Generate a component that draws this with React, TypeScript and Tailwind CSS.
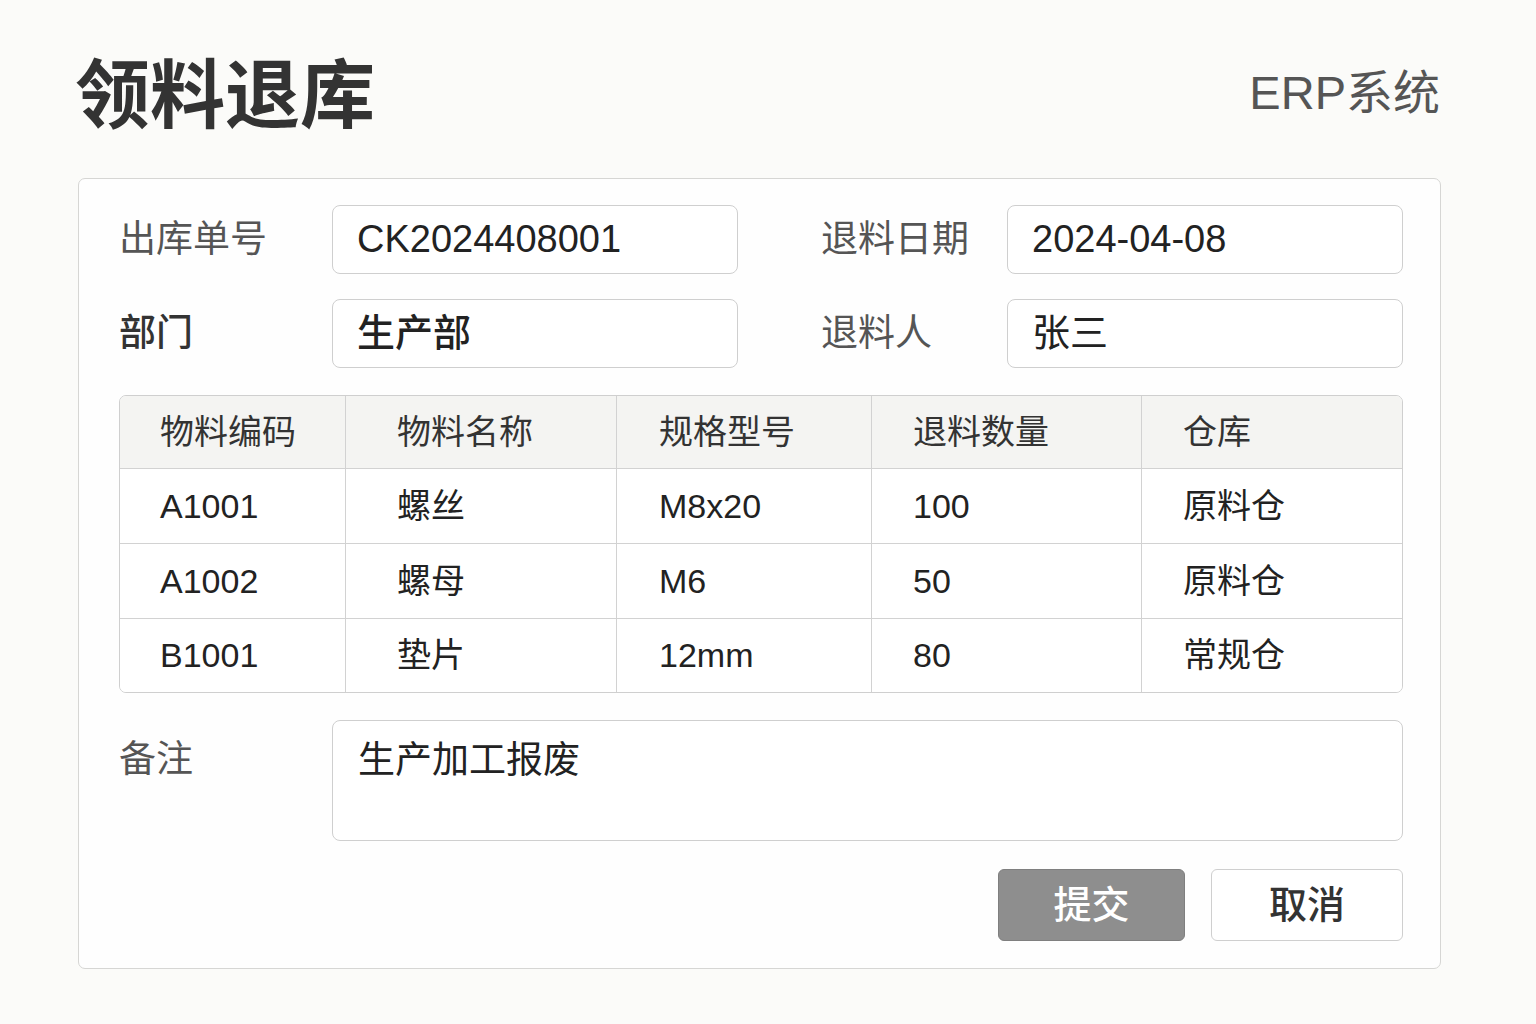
import React from "react";

const FONT = { fontFamily: '"Liberation Sans", "Noto Sans CJK SC", sans-serif' };

const rows = [
  ["A1001", "螺丝", "M8x20", "100", "原料仓"],
  ["A1002", "螺母", "M6", "50", "原料仓"],
  ["B1001", "垫片", "12mm", "80", "常规仓"],
];
const heads = ["物料编码", "物料名称", "规格型号", "退料数量", "仓库"];
const colW = ["w-[226px]", "w-[271px]", "w-[255px]", "w-[270px]", "flex-1"];
const colPad = ["pl-[40px]", "pl-[51px]", "pl-[42px]", "pl-[41px]", "pl-[41px]"];

function Field({ value, className = "" }: { value: string; className?: string }) {
  return (
    <div
      className={`h-[69px] rounded-[8px] border border-[#cfcfcf] bg-white flex items-center pl-[24px] text-[38px] text-[#222] ${className}`}
    >
      {value}
    </div>
  );
}

export default function App() {
  return (
    <div className="w-[1536px] h-[1024px] bg-[#fbfbf9] overflow-hidden" style={FONT}>
      <div className="flex items-center justify-between pl-[75px] pr-[96px] pt-[58px] h-[134px]">
        <div className="text-[75px] leading-none font-bold text-[#333]">领料退库</div>
        <div className="text-[47px] leading-none text-[#555] -mt-[8px]">ERP系统</div>
      </div>
      <div className="ml-[78px] mt-[44px] w-[1363px] h-[791px] rounded-[7px] border border-[#d6d6d4] bg-[#fefefe] pl-[40px] pr-[37px] pt-[26px]">
        <div className="flex items-center">
          <div className="w-[213px] text-[37px] text-[#555]">出库单号</div>
          <Field value="CK2024408001" className="w-[406px]" />
          <div className="w-[83px]" />
          <div className="w-[186px] text-[37px] text-[#555]">退料日期</div>
          <Field value="2024-04-08" className="flex-1" />
        </div>
        <div className="flex items-center mt-[25px]">
          <div className="w-[213px] text-[37px] text-[#333] font-medium">部门</div>
          <Field value="生产部" className="w-[406px] font-medium" />
          <div className="w-[83px]" />
          <div className="w-[186px] text-[37px] text-[#555]">退料人</div>
          <Field value="张三" className="flex-1" />
        </div>

        <div className="mt-[27px] rounded-[7px] border border-[#cfcfcf] overflow-hidden">
          <div className="flex h-[73px] bg-[#f4f4f2] border-b border-[#d2d2d2]">
            {heads.map((h, i) => (
              <div
                key={h}
                className={`${colW[i]} ${colPad[i]} flex items-center text-[34px] text-[#333] ${i < 4 ? "border-r border-[#d2d2d2]" : ""}`}
              >
                {h}
              </div>
            ))}
          </div>
          {rows.map((r, ri) => (
            <div
              key={ri}
              className={`flex bg-white ${ri < rows.length - 1 ? "h-[75px] border-b border-[#d2d2d2]" : "h-[73px]"}`}
            >
              {r.map((c, i) => (
                <div
                  key={i}
                  className={`${colW[i]} ${colPad[i]} flex items-center text-[34px] text-[#222] ${i < 4 ? "border-r border-[#d2d2d2]" : ""}`}
                >
                  {c}
                </div>
              ))}
            </div>
          ))}
        </div>

        <div className="flex mt-[27px]">
          <div className="w-[213px] pt-[12px] text-[37px] text-[#555]">备注</div>
          <div className="flex-1 h-[121px] rounded-[8px] border border-[#cfcfcf] bg-white pl-[25px] pt-[12px] text-[37px] text-[#222]">
            生产加工报废
          </div>
        </div>

        <div className="flex justify-end mt-[28px] gap-[26px]">
          <button className="w-[187px] h-[72px] rounded-[6px] bg-[#8e8e8e] border border-[#7f7f7f] text-white text-[38px] font-medium">
            提交
          </button>
          <button className="w-[192px] h-[72px] rounded-[6px] bg-white border border-[#cfcfcf] text-[#333] text-[38px] font-medium">
            取消
          </button>
        </div>
      </div>
    </div>
  );
}
